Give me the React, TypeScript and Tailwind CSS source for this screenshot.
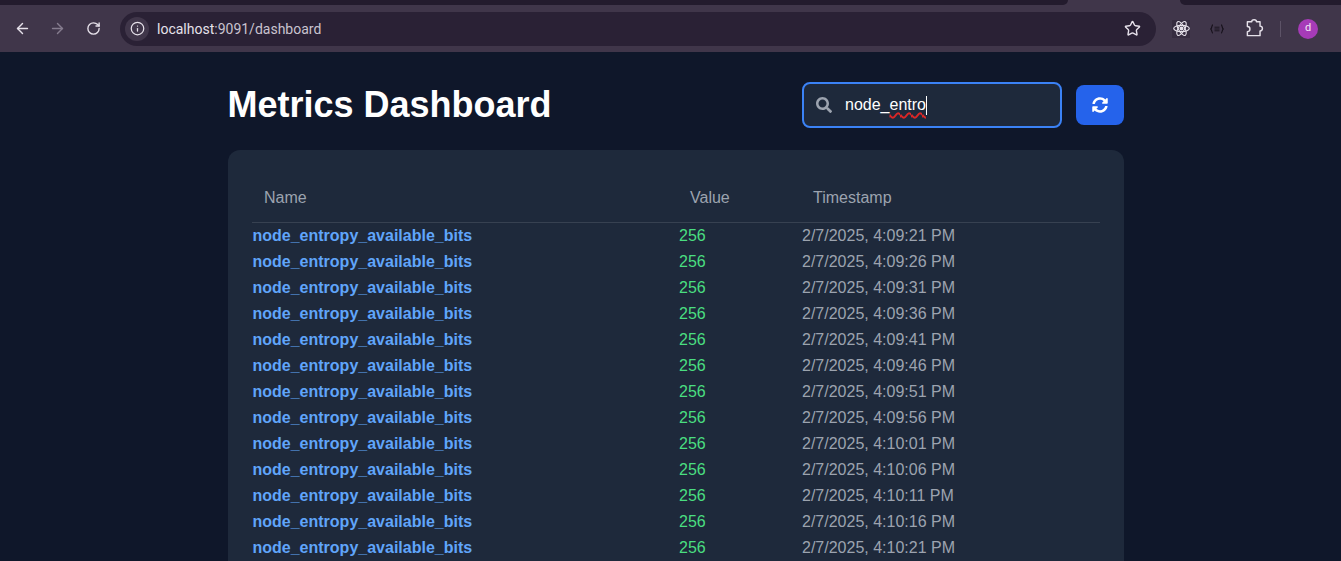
import { ArrowLeft, ArrowRight, Info, RotateCw, Star } from "lucide-react";
import { FaSearch, FaSyncAlt } from "react-icons/fa";

const times = [
  "4:09:21",
  "4:09:26",
  "4:09:31",
  "4:09:36",
  "4:09:41",
  "4:09:46",
  "4:09:51",
  "4:09:56",
  "4:10:01",
  "4:10:06",
  "4:10:11",
  "4:10:16",
  "4:10:21",
];

function BrowserBar() {
  return (
    <div className="h-[52px] bg-[#231b2d] font-['Roboto',sans-serif]">
      <div className="flex h-[5px] justify-between bg-[#40364a]">
        <div className="w-[1068px] rounded-br-lg bg-[#231b2d]" />
        <div className="w-[112px]" />
        <div className="flex-1 rounded-bl-lg bg-[#231b2d]" />
      </div>
      <div className="flex h-[47px] items-center bg-[#40364a] pl-[14px]">
        <ArrowLeft size={17} strokeWidth={2} className="text-[#e6e1ea]" />
        <ArrowRight size={17} strokeWidth={2} className="ml-[18px] text-[#857c8e]" />
        <RotateCw size={15} strokeWidth={2.2} className="ml-[20px] text-[#e6e1ea]" />
        <div className="ml-[19px] flex h-[34px] w-[1036px] items-center rounded-full bg-[#2a2135] pl-[5px] pr-[15px]">
          <div className="flex h-6 w-6 items-center justify-center rounded-full bg-[#40364a]">
            <Info size={15} className="text-[#e6e1ea]" />
          </div>
          <span className="ml-[8px] flex-1 text-sm text-[#e6e1ea]">
            localhost<span className="text-[#c9c3cf]">:9091/dashboard</span>
          </span>
          <Star size={17} className="text-[#e6e1ea]" />
        </div>
        <div className="ml-[16px] flex h-[18px] w-[18px] items-center justify-center bg-[#362c40]">
          <svg viewBox="0 0 24 24" className="h-[17px] w-[17px] text-[#e6e1ea]" fill="none" stroke="currentColor" strokeWidth="1.6">
            <ellipse cx="12" cy="12" rx="11" ry="4.4" />
            <ellipse cx="12" cy="12" rx="11" ry="4.4" transform="rotate(60 12 12)" />
            <ellipse cx="12" cy="12" rx="11" ry="4.4" transform="rotate(120 12 12)" />
            <circle cx="12" cy="12" r="2" fill="currentColor" />
          </svg>
        </div>
        <svg viewBox="0 0 14 10" className="ml-[20px] h-[10px] w-[14px] text-[#17121c]" fill="none" stroke="currentColor" strokeWidth="1.2">
          <path d="M3 .8C1.6.8 2 4.2.8 5 2 5.8 1.6 9.2 3 9.2" />
          <path d="M11 .8c1.4 0 1 3.4 2.2 4.2C12 5.8 12.4 9.2 11 9.2" />
          <path d="M4.5 3.2h5M4.5 5h5M4.5 6.8h5" strokeWidth="0.9" />
        </svg>
        <svg viewBox="0 0 24 24" className="ml-[21px] h-[19px] w-[19px] text-[#e6e1ea]" fill="none" stroke="currentColor" strokeWidth="1.8" strokeLinejoin="round">
          <path d="M3 3.5h5.5a3 2.5 0 0 1 6 0H19V9a2.8 2.8 0 0 1 0 6v6H3v-5a3.2 3.2 0 0 0 0-6.5Z" />
        </svg>
        <div className="ml-[16px] h-[16px] w-px bg-[#5d5367]" />
        <div className="ml-[17px] flex h-5 w-5 items-center justify-center rounded-full bg-[#a63bb8] text-[11px] text-[#f3e6f6]">d</div>
      </div>
    </div>
  );
}

export default function App() {
  return (
    <div className="h-[561px] overflow-hidden bg-[#0f172a] font-['Liberation_Sans',sans-serif]">
      <BrowserBar />
      <main className="ml-[228px] w-[896px] pt-[30px]">
        <header className="flex h-[46px] items-center justify-between">
          <h1 className="-ml-[0.5px] text-4xl font-bold text-white">Metrics Dashboard</h1>
          <div className="flex items-center gap-[14px]">
            <div className="flex h-[46px] w-[260px] items-center rounded-lg border-2 border-[#3b82f6] bg-[#1e293b] pl-3">
              <FaSearch size={16} className="text-[#9ca3af]" />
              <span className="ml-[13px] flex items-center text-base text-white">
                node_
                <span className="underline decoration-[#dc2626] decoration-wavy decoration-[1.5px] underline-offset-2">entro</span>
                <span className="h-[19px] w-px bg-white" />
              </span>
            </div>
            <button className="flex h-10 w-12 items-center justify-center rounded-lg bg-[#2563eb] pr-px text-white">
              <FaSyncAlt size={16} />
            </button>
          </div>
        </header>
        <section className="mt-[22px] rounded-xl bg-[#1e293b] p-6">
          <table className="w-full table-fixed border-collapse">
            <colgroup>
              <col className="w-[427px]" />
              <col className="w-[123px]" />
              <col />
            </colgroup>
            <thead>
              <tr className="border-b border-[#374151] text-left text-[#9ca3af]">
                <th className="px-3 py-3 text-base font-normal">Name</th>
                <th className="py-3 pl-[11px] pr-3 text-base font-normal">Value</th>
                <th className="py-3 pl-[11px] pr-3 text-base font-normal">Timestamp</th>
              </tr>
            </thead>
            <tbody>
              {times.map((t) => (
                <tr key={t} className="h-[26px] text-base">
                  <td className="pl-[0.5px] font-bold text-[#60a5fa]">node_entropy_available_bits</td>
                  <td className="text-[#4ade80]">256</td>
                  <td className="text-[#9ca3af]">2/7/2025, {t} PM</td>
                </tr>
              ))}
            </tbody>
          </table>
        </section>
      </main>
    </div>
  );
}
